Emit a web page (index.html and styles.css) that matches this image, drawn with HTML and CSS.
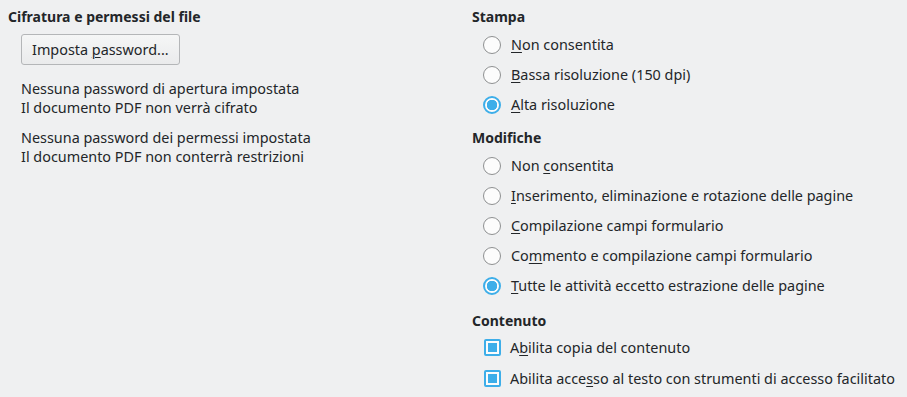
FILE: index.html
```html
<!DOCTYPE html>
<html lang="it">
<head>
    <meta charset="UTF-8">
    <title>Sicurezza</title>
    <link rel="stylesheet" href="styles.css">
</head>
<body>

<div class="page">

    <!-- Colonna sinistra -->
    <div class="col">
        <h3 class="title">Cifratura e permessi del file</h3>
        <div class="indent">
            <button class="btn">Imposta <u>p</u>assword...</button>
            <p class="info">Nessuna password di apertura impostata<br>Il documento PDF non verrà cifrato</p>
            <p class="info">Nessuna password dei permessi impostata<br>Il documento PDF non conterrà restrizioni</p>
        </div>
    </div>

    <!-- Colonna destra -->
    <div class="col">
        <div class="group">
            <h3 class="title">Stampa</h3>
            <div class="indent">
                <label class="opt"><span class="radio"></span><span><u>N</u>on consentita</span></label>
                <label class="opt"><span class="radio"></span><span><u>B</u>assa risoluzione (150 dpi)</span></label>
                <label class="opt"><span class="radio on"></span><span><u>A</u>lta risoluzione</span></label>
            </div>
        </div>

        <div class="group">
            <h3 class="title">Modifiche</h3>
            <div class="indent">
                <label class="opt"><span class="radio"></span><span>Non <u>c</u>onsentita</span></label>
                <label class="opt"><span class="radio"></span><span><u>I</u>nserimento, eliminazione e rotazione delle pagine</span></label>
                <label class="opt"><span class="radio"></span><span><u>C</u>ompilazione campi formulario</span></label>
                <label class="opt"><span class="radio"></span><span>Co<u>m</u>mento e compilazione campi formulario</span></label>
                <label class="opt"><span class="radio on"></span><span><u>T</u>utte le attività eccetto estrazione delle pagine</span></label>
            </div>
        </div>

        <div class="group content">
            <h3 class="title">Contenuto</h3>
            <div class="indent">
                <label class="opt"><span class="check"></span><span>A<u>b</u>ilita copia del contenuto</span></label>
                <label class="opt"><span class="check"></span><span>Abilita acce<u>s</u>so al testo con strumenti di accesso facilitato</span></label>
            </div>
        </div>
    </div>

</div>

</body>
</html>
```

FILE: styles.css
```css
/* Base */
body {
    margin: 0;
    background-color: #eff0f1;
    color: #232629;
    font-family: "Noto Sans", "DejaVu Sans", sans-serif;
    font-size: 14.4px;
    line-height: 20px;
}
.page {
    display: grid;
    grid-template-columns: 464px 1fr;
    padding: 7px 0 0 8px;
}
.title {
    margin: 0;
    font-size: 14px;
    font-weight: bold;
    line-height: 20px;
}
.indent {
    padding-left: 13px;
}
u {
    text-decoration-thickness: 1px;
    text-underline-offset: 2px;
}

/* Left side */
.btn {
    margin-top: 7px;
    height: 31px;
    padding: 0 10px;
    font: inherit;
    color: #232629;
    background: linear-gradient(#f5f6f6, #eaebec);
    border: 1px solid #b4b6b8;
    border-radius: 3px;
}
.info {
    margin: 14px 0 0;
    line-height: 19px;
}
.info + .info {
    margin-top: 11px;
}

/* Right side */
.group .indent {
    padding-left: 11px;
}
.group + .group {
    margin-top: 8px;
}
.group.content {
    margin-top: 10px;
}
.group .title {
    margin-bottom: 3px;
}
.group.content .title {
    margin-bottom: 1px;
}
.opt {
    display: flex;
    align-items: center;
    gap: 10px;
    height: 30px;
}
.content .opt {
    height: 31px;
}
.radio {
    box-sizing: border-box;
    width: 18px;
    height: 18px;
    border: 1px solid #8e9091;
    border-radius: 50%;
    background-color: #fcfcfc;
}
.radio.on {
    border: 2px solid #3daee9;
    background: radial-gradient(circle, #3daee9 0 5px, #fcfcfc 5.5px);
}
.check {
    box-sizing: border-box;
    width: 17px;
    height: 17px;
    margin-left: 1px;
    margin-right: -1px;
    border: 2px solid #3daee9;
    border-radius: 2px;
    background-color: #fcfcfc;
    box-shadow: inset 0 0 0 2px #fcfcfc, inset 0 0 0 9px #3daee9;
}
```
